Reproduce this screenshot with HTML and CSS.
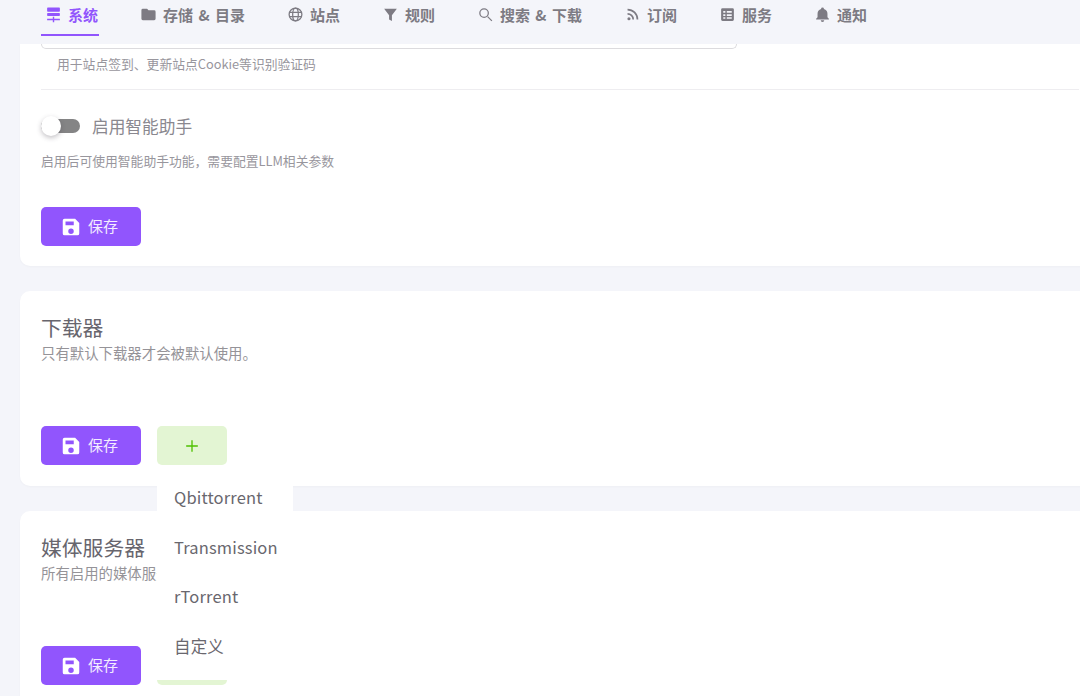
FILE: index.html
```html
<!DOCTYPE html>
<html lang="zh-CN">
<head>
<meta charset="utf-8">
<title>设定</title>
<link rel="stylesheet" href="styles.css">
</head>
<body>
<nav class="tabs">
  <a class="tab active"><svg class="ico" viewBox="0 0 24 24"><path d="M4 2h16a1 1 0 0 1 1 1v4a1 1 0 0 1-1 1H4a1 1 0 0 1-1-1V3a1 1 0 0 1 1-1zm0 8h16a1 1 0 0 1 1 1v2a1 1 0 0 1-1 1H4a1 1 0 0 1-1-1v-2a1 1 0 0 1 1-1zm7 5h2v3h8v2h-8v3h-2v-3H3v-2h8z"/></svg><span>系统</span></a>
  <a class="tab"><svg class="ico" viewBox="0 0 24 24"><path d="M10 4H4a2 2 0 0 0-2 2v12a2 2 0 0 0 2 2h16a2 2 0 0 0 2-2V8a2 2 0 0 0-2-2h-8z"/></svg><span>存储 &amp; 目录</span></a>
  <a class="tab"><svg class="ico line" viewBox="0 0 24 24"><circle cx="12" cy="12" r="9"/><ellipse cx="12" cy="12" rx="4" ry="9"/><path d="M3 9h18M3 15h18"/></svg><span>站点</span></a>
  <a class="tab"><svg class="ico" viewBox="0 0 24 24"><path d="M3 4h18l-7 9v8l-4-2v-6z"/></svg><span>规则</span></a>
  <a class="tab"><svg class="ico line" viewBox="0 0 24 24"><circle cx="10" cy="10" r="6"/><path d="M15 15l6 6"/></svg><span>搜索 &amp; 下载</span></a>
  <a class="tab"><svg class="ico rss" viewBox="0 0 24 24"><circle cx="7" cy="18" r="2.2" class="dot"/><path d="M5 11a8 8 0 0 1 8 8M5 5a14 14 0 0 1 14 14"/></svg><span>订阅</span></a>
  <a class="tab"><svg class="ico" viewBox="0 0 24 24"><path fill-rule="evenodd" d="M5 3h14a2 2 0 0 1 2 2v14a2 2 0 0 1-2 2H5a2 2 0 0 1-2-2V5a2 2 0 0 1 2-2zm1 4v2.500h3V7zm5 0v2.500h7V7zm-5 4.500V14h3v-2.500zm5 0V14h7v-2.500zM6 16v2h3v-2zm5 0v2h7v-2z"/></svg><span>服务</span></a>
  <a class="tab"><svg class="ico" viewBox="0 0 24 24"><path d="M12 2a2 2 0 0 1 2 2v.400A7 7 0 0 1 19 11v5l2 2v1H3v-1l2-2v-5a7 7 0 0 1 5-6.600V4a2 2 0 0 1 2-2zm-2.500 18h5a2.500 2.500 0 0 1-5 0z"/></svg><span>通知</span></a>
</nav>

<main class="content">
  <section class="card first">
    <div class="input-tail"></div>
    <p class="hint indented">用于站点签到、更新站点Cookie等识别验证码</p>
    <hr class="rule">
    <div class="switch-row">
      <span class="switch"><span class="knob"></span></span>
      <span class="switch-label">启用智能助手</span>
    </div>
    <p class="hint desc">启用后可使用智能助手功能，需要配置LLM相关参数</p>
    <div class="actions first-actions">
      <button class="btn save"><svg class="save-ico" viewBox="0 0 24 24"><path fill-rule="evenodd" d="M5 3h11.500L21 7.500V19a2 2 0 0 1-2 2H5a2 2 0 0 1-2-2V5a2 2 0 0 1 2-2zm1 3v4h9V6zm6 7.500a3 3 0 1 0 0 6 3 3 0 0 0 0-6z"/></svg><span class="save-text">保存</span></button>
    </div>
  </section>

  <section class="card">
    <h2 class="title">下载器</h2>
    <p class="sub">只有默认下载器才会被默认使用。</p>
    <div class="actions">
      <button class="btn save"><svg class="save-ico" viewBox="0 0 24 24"><path fill-rule="evenodd" d="M5 3h11.500L21 7.500V19a2 2 0 0 1-2 2H5a2 2 0 0 1-2-2V5a2 2 0 0 1 2-2zm1 3v4h9V6zm6 7.500a3 3 0 1 0 0 6 3 3 0 0 0 0-6z"/></svg><span class="save-text">保存</span></button>
      <div class="add-wrap">
        <button class="btn add"><svg class="plus" viewBox="0 0 24 24"><path d="M12 5v14M5 12h14"/></svg></button>
        <ul class="menu">
          <li>Qbittorrent</li>
          <li>Transmission</li>
          <li>rTorrent</li>
          <li>自定义</li>
        </ul>
      </div>
    </div>
  </section>

  <section class="card">
    <h2 class="title">媒体服务器</h2>
    <p class="sub">所有启用的媒体服务器都会被使用。</p>
    <div class="actions">
      <button class="btn save"><svg class="save-ico" viewBox="0 0 24 24"><path fill-rule="evenodd" d="M5 3h11.500L21 7.500V19a2 2 0 0 1-2 2H5a2 2 0 0 1-2-2V5a2 2 0 0 1 2-2zm1 3v4h9V6zm6 7.500a3 3 0 1 0 0 6 3 3 0 0 0 0-6z"/></svg><span class="save-text">保存</span></button>
      <button class="btn add"><svg class="plus" viewBox="0 0 24 24"><path d="M12 5v14M5 12h14"/></svg></button>
    </div>
  </section>
</main>
</body>
</html>
```

FILE: styles.css
```css
* { box-sizing: border-box; }
html, body { height: 100%; }
body {
  margin: 0;
  overflow: hidden;
  background: #f4f5fa;
  font-family: "Noto Sans CJK SC", "Inter", "Noto Sans", sans-serif;
  color: #6d6b74;
}
.tabs {
  display: flex;
  height: 44px;
  padding-left: 41px;
  background: #f4f5fa;
  align-items: flex-start;
}
.tab {
  display: flex;
  align-items: center;
  gap: 6px;
  height: 36px;
  padding: 0 1px 6px 4px;
  margin-right: 37px;
  font-size: 15px;
  font-weight: 700;
  word-spacing: 2px;
  color: #7d7b83;
  border-bottom: 2px solid transparent;
  white-space: nowrap;
}
.tab.active { color: #9155fd; border-bottom-color: #9155fd; }
.ico { width: 17px; height: 17px; fill: currentColor; flex: none; }
.ico.line { fill: none; stroke: currentColor; stroke-width: 1.8; }
.ico.rss { fill: none; stroke: currentColor; stroke-width: 2.4; }
.ico.rss .dot { fill: currentColor; stroke: none; }

.content {
  display: flex;
  flex-direction: column;
  gap: 25px;
  width: 1100px;
  padding-left: 20px;
}
.card {
  position: relative;
  background: #fff;
  border-radius: 10px;
  padding: 22px 21px 21px;
  height: 195px;
  box-shadow: 0 1px 2px rgba(58, 53, 65, .03);
}
.card.first {
  height: 222px;
  border-radius: 0 0 10px 10px;
  padding-top: 0;
}
.title {
  margin: 0 0 1px;
  font-size: 20.8px;
  line-height: 28px;
  font-weight: 400;
  color: #67656d;
}
.sub {
  margin: 0;
  font-size: 14.4px;
  line-height: 22px;
  color: #959398;
}
.input-tail {
  width: 696px;
  height: 5px;
  border: 1px solid #dcdbde;
  border-top: 0;
  border-radius: 0 0 6px 6px;
}
.hint {
  margin: 0;
  font-size: 12.8px;
  line-height: 18px;
  color: #98969d;
}
.hint.indented { margin: 6px 0 0 16px; }
.rule {
  margin: 16px 0 0;
  border: 0;
  border-top: 1px solid #eeedf0;
}
.switch-row {
  display: flex;
  align-items: center;
  gap: 12px;
  margin-top: 23px;
  height: 26px;
}
.switch {
  position: relative;
  display: block;
  width: 39px;
  height: 14px;
  border-radius: 7px;
  background: #848485;
}
.knob {
  position: absolute;
  left: 0;
  top: -3px;
  width: 20px;
  height: 20px;
  border-radius: 50%;
  background: #fff;
  box-shadow: 0 2px 5px rgba(58, 53, 65, .3);
}
.switch-label { font-size: 16.7px; color: #8a888f; }
.desc { margin-top: 13px; }
.actions { display: flex; gap: 16px; margin-top: 62px; }
.first-actions { margin-top: 37px; }
.btn {
  display: flex;
  align-items: center;
  justify-content: center;
  height: 39px;
  border: 0;
  border-radius: 5px;
  font-family: inherit;
  padding: 0;
}
.save {
  width: 100px;
  gap: 6px;
  padding-right: 4px;
  background: #9155fd;
  color: #f3ecff;
  font-size: 15px;
}
.save-text { margin-bottom: 2px; }
.save-ico { width: 22px; height: 22px; fill: #fff; }
.add { width: 70px; background: #e3f5d3; }
.plus { width: 20px; height: 20px; fill: none; stroke: #4fc000; stroke-width: 1.6; }
.add-wrap { position: relative; }
.menu {
  position: absolute;
  left: 0;
  top: 59px;
  z-index: 5;
  width: 136px;
  height: 195px;
  margin: 0;
  padding: 0 0 0 17px;
  list-style: none;
  background: #fff;
  font-size: 16.5px;
  color: #69676e;
}
.menu li { height: 49.500px; line-height: 24px; letter-spacing: .15px; }
```
